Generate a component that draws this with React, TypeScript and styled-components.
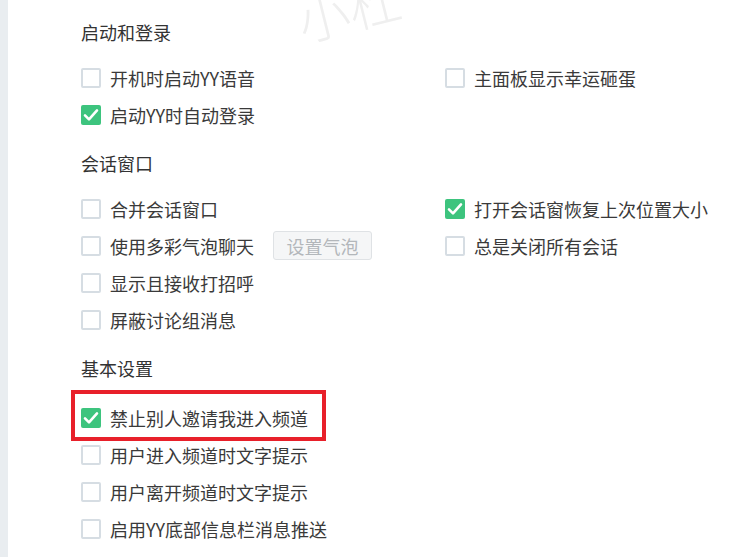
import React from 'react';
import styled, { createGlobalStyle } from 'styled-components';

const GlobalStyle = createGlobalStyle`
  html, body {
    margin: 0;
    padding: 0;
    background: #ffffff;
  }
  body {
    font-family: "Noto Sans CJK SC", "Noto Sans", sans-serif;
  }
`;

interface OptionItem {
  label: string;
  checked?: boolean;
  highlighted?: boolean;
  button?: string;
}

interface SectionData {
  title: string;
  left: OptionItem[];
  right: OptionItem[];
}

const sections: SectionData[] = [
  {
    title: '启动和登录',
    left: [
      { label: '开机时启动YY语音' },
      { label: '启动YY时自动登录', checked: true },
    ],
    right: [{ label: '主面板显示幸运砸蛋' }],
  },
  {
    title: '会话窗口',
    left: [
      { label: '合并会话窗口' },
      { label: '使用多彩气泡聊天', button: '设置气泡' },
      { label: '显示且接收打招呼' },
      { label: '屏蔽讨论组消息' },
    ],
    right: [
      { label: '打开会话窗恢复上次位置大小', checked: true },
      { label: '总是关闭所有会话' },
    ],
  },
  {
    title: '基本设置',
    left: [
      { label: '禁止别人邀请我进入频道', checked: true, highlighted: true },
      { label: '用户进入频道时文字提示' },
      { label: '用户离开频道时文字提示' },
      { label: '启用YY底部信息栏消息推送' },
    ],
    right: [],
  },
];

const Checkbox: React.FC<{ checked?: boolean }> = ({ checked }) => (
  <Box $checked={checked}>
    {checked && (
      <svg width="18" height="18" viewBox="0 0 18 18">
        <path
          d="M3 9.4 L7 13.4 L15 4.4"
          fill="none"
          stroke="#ffffff"
          strokeWidth="2.6"
          strokeLinecap="round"
          strokeLinejoin="round"
        />
      </svg>
    )}
  </Box>
);

const Option: React.FC<{ item: OptionItem }> = ({ item }) => (
  <Row $highlighted={item.highlighted}>
    <Checkbox checked={item.checked} />
    <Label>{item.label}</Label>
    {item.button && <GhostButton disabled>{item.button}</GhostButton>}
    {item.highlighted && <Highlight />}
  </Row>
);

export default function App() {
  return (
    <>
      <GlobalStyle />
      <Page>
        <SideStrip />
        <Content>
          <Watermark>小杜</Watermark>
          {sections.map((section) => (
            <Section key={section.title}>
              <Heading>{section.title}</Heading>
              <Columns>
                <Column>
                  {section.left.map((item) => (
                    <Option key={item.label} item={item} />
                  ))}
                </Column>
                <Column>
                  {section.right.map((item) => (
                    <Option key={item.label} item={item} />
                  ))}
                </Column>
              </Columns>
            </Section>
          ))}
        </Content>
      </Page>
    </>
  );
}

const Page = styled.div`
  display: flex;
  width: 743px;
  height: 557px;
  overflow: hidden;
  background: #ffffff;
`;

const SideStrip = styled.div`
  width: 8px;
  flex-shrink: 0;
  background: #e9edf0;
`;

const Content = styled.div`
  position: relative;
  flex: 1;
  display: flex;
  flex-direction: column;
  gap: 17px;
  padding: 19px 0 0 73px;
`;

const Watermark = styled.div`
  position: absolute;
  left: 288px;
  top: -30px;
  font-size: 52px;
  letter-spacing: 0;
  color: #efefef;
  transform: rotate(-14deg);
  pointer-events: none;
  font-weight: 300;
`;

const Section = styled.section`
  display: flex;
  flex-direction: column;
  gap: 14px;
`;

const Heading = styled.h3`
  margin: 0;
  height: 26px;
  line-height: 26px;
  font-size: 18px;
  font-weight: 400;
  color: #333333;
`;

const Columns = styled.div`
  display: grid;
  grid-template-columns: 364px 1fr;
`;

const Column = styled.div`
  display: flex;
  flex-direction: column;
`;

const Row = styled.div<{ $highlighted?: boolean }>`
  position: relative;
  display: flex;
  align-items: center;
  height: 37px;
  margin-top: ${({ $highlighted }) => ($highlighted ? '4px' : '0')};
`;

const Box = styled.span<{ $checked?: boolean }>`
  box-sizing: border-box;
  width: 20px;
  height: 20px;
  flex-shrink: 0;
  display: flex;
  align-items: center;
  justify-content: center;
  border-radius: 2px;
  border: ${({ $checked }) => ($checked ? 'none' : '2px solid #d6dde3')};
  background: ${({ $checked }) => ($checked ? '#3dc47e' : '#ffffff')};
`;

const Label = styled.span`
  margin-left: 9px;
  font-size: 18px;
  line-height: 24px;
  color: #3a3a3a;
  white-space: nowrap;
`;

const GhostButton = styled.button`
  box-sizing: border-box;
  margin-left: 19px;
  width: 99px;
  height: 29px;
  padding: 0;
  border: 1px solid #dfe2e5;
  border-radius: 3px;
  background: #f5f6f7;
  font-family: inherit;
  font-size: 18px;
  color: #b3b7bb;
`;

const Highlight = styled.div`
  position: absolute;
  left: -10px;
  top: -9px;
  width: 255px;
  height: 51px;
  box-sizing: border-box;
  border: 4px solid #e8202a;
  pointer-events: none;
`;
